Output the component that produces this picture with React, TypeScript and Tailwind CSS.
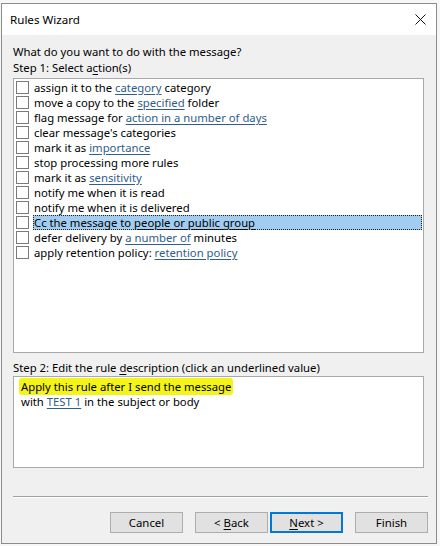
const font = { fontFamily: '"Noto Sans", "Open Sans", sans-serif' };

const Link = ({ children }: { children: React.ReactNode }) => (
  <span className="text-[#2f5d8c] underline underline-offset-2 decoration-[#2f5d8c]">{children}</span>
);

type Row = { parts: (string | { link: string })[]; selected?: boolean };

const rows: Row[] = [
  { parts: ["assign it to the ", { link: "category" }, " category"] },
  { parts: ["move a copy to the ", { link: "specified" }, " folder"] },
  { parts: ["flag message for ", { link: "action in a number of days" }] },
  { parts: ["clear message's categories"] },
  { parts: ["mark it as ", { link: "importance" }] },
  { parts: ["stop processing more rules"] },
  { parts: ["mark it as ", { link: "sensitivity" }] },
  { parts: ["notify me when it is read"] },
  { parts: ["notify me when it is delivered"] },
  { parts: ["Cc the message to ", { link: "people or public group" }], selected: true },
  { parts: ["defer delivery by ", { link: "a number of" }, " minutes"] },
  { parts: ["apply retention policy: ", { link: "retention policy" }] },
];

const Button = ({ children, primary }: { children: React.ReactNode; primary?: boolean }) => (
  <div
    className={
      "w-[73px] h-[21px] flex items-center justify-center bg-[#e1e1e1] text-[11.4px] leading-[14px] text-black " +
      (primary ? "border-2 border-[#0078d7]" : "border border-[#adadad]")
    }
  >
    {children}
  </div>
);

export default function App() {
  return (
    <div className="w-[440px] h-[546px] bg-[#f7f7f7] pt-[3px] pl-[1px]" style={font}>
      <div className="w-[436px] h-[541px] border border-[#8c8c8c] bg-[#f0f0f0] flex flex-col text-[11.3px] text-black leading-[15px]">
        {/* title bar */}
        <div className="h-[31px] bg-white flex items-center justify-between pl-[8px] pr-[10px]">
          <span className="text-[11.6px]">Rules Wizard</span>
          <svg width="11" height="11" viewBox="0 0 11 11">
            <path d="M0.5 0.5 L10.5 10.5 M10.5 0.5 L0.5 10.5" stroke="#111" strokeWidth="1" />
          </svg>
        </div>

        <div className="flex flex-col pl-[11px] pr-[12px] pt-[9px]">
          <div className="h-[16px] leading-[16px]">What do you want to do with the message?</div>
          <div className="h-[16px] leading-[16px]">
            Step 1: Select a<span className="underline underline-offset-2">c</span>tion(s)
          </div>

          <div className="mt-[2px] h-[275px] bg-white border border-[#a9a9a9] pt-[1px] pl-[2px] pr-[1px]">
            {rows.map((r, i) => (
              <div key={i} className="h-[15px] flex items-center">
                <div className="w-[13px] h-[13px] border border-[#7a7a7a] bg-white shrink-0" />
                <div
                  className={
                    "ml-[4px] h-[15px] flex items-center pl-[1px] leading-[14px] " +
                    (r.selected ? "flex-1 bg-[#a3cdf0] outline outline-1 outline-dotted outline-[#222] -outline-offset-1" : "")
                  }
                >
                  <span className="whitespace-pre">
                    {r.parts.map((p, j) =>
                      typeof p === "string" ? (
                        <span key={j}>{p}</span>
                      ) : r.selected ? (
                        <span key={j} className="underline underline-offset-2">{p.link}</span>
                      ) : (
                        <Link key={j}>{p.link}</Link>
                      )
                    )}
                  </span>
                </div>
              </div>
            ))}
          </div>

          <div className="mt-[7px] h-[16px] leading-[16px]">
            Step 2: Edit the rule <span className="underline underline-offset-2">d</span>escription (click an underlined value)
          </div>

          <div className="h-[92px] bg-white border border-[#a9a9a9] pt-[2px] pl-[5px]">
            <div className="h-[15px] leading-[15px]">
              <span className="bg-[#f4f41a] px-[2px] py-[1px] rounded-[3px]">Apply this rule after I send the message</span>
            </div>
            <div className="h-[15px] leading-[15px] pl-[2px]">
              with <Link>TEST 1</Link> in the subject or body
            </div>
          </div>

          <div className="mt-[28px] h-[2px] border-t border-[#a0a0a0] border-b border-b-white w-[415px]" />

          <div className="mt-[14px] flex justify-end w-[415px]">
            <Button>Cancel</Button>
            <div className="ml-[12px]">
              <Button>
                &lt; <span className="underline underline-offset-2 ml-[3px]">B</span>ack
              </Button>
            </div>
            <div className="ml-[2px]">
              <Button primary>
                <span className="underline underline-offset-2">N</span>ext &gt;
              </Button>
            </div>
            <div className="ml-[12px]">
              <Button>Finish</Button>
            </div>
          </div>
        </div>
      </div>
    </div>
  );
}
